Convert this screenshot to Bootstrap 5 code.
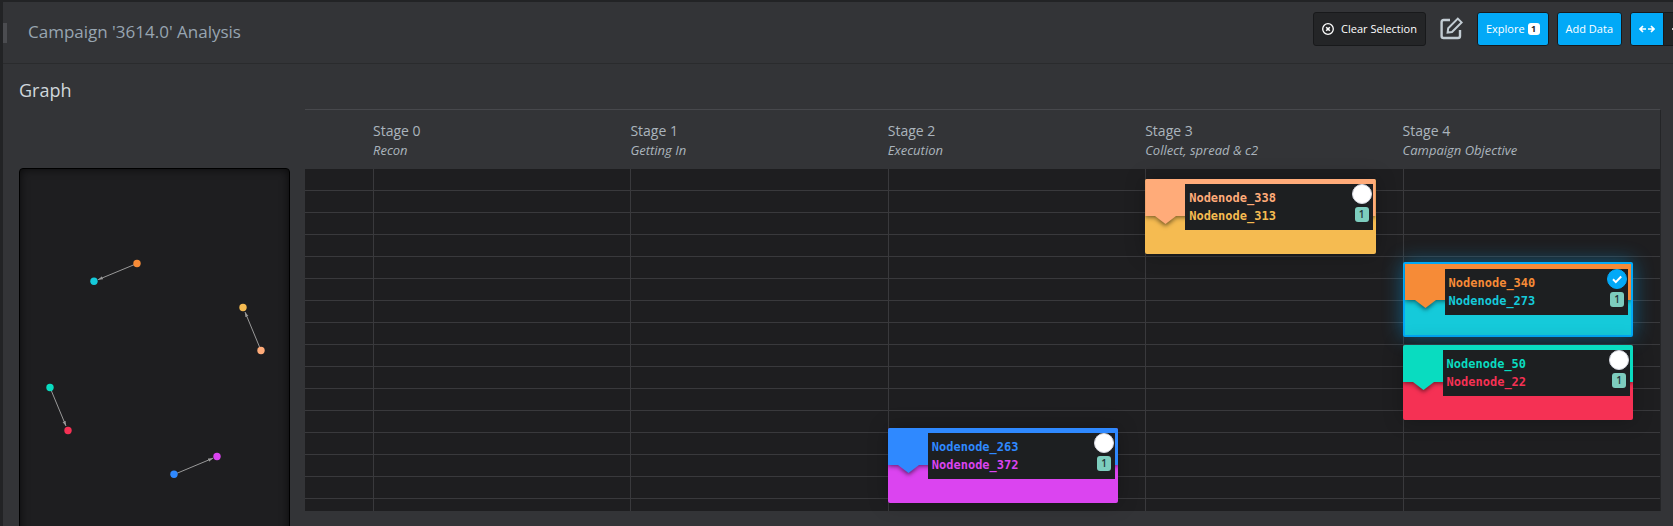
<!DOCTYPE html>
<html lang="en">
<head>
<meta charset="utf-8">
<meta name="viewport" content="width=device-width, initial-scale=1">
<title>Campaign '3614.0' Analysis</title>
<link href="https://cdn.jsdelivr.net/npm/bootstrap@5.3.0/dist/css/bootstrap.min.css" rel="stylesheet">
<style>
  html, body { height: 100%; }
  body { background: #222325; color: #abb4bd; font-family: "Open Sans", "Noto Sans", sans-serif; font-size: 14px; overflow: hidden; padding: 2px 0 0 3px; }
  .shell { background: #333437; height: 100%; overflow: hidden; }
  .topbar { height: 62px; border-bottom: 1px solid #2a2b2d; padding-bottom: 8px; }
  .handle { width: 4px; height: 20px; background: #4b4c50; margin-top: 8px; }
  .title { font-size: 17px; line-height: 24px; color: #98a5b1; margin: 7px 0 0 21px; }
  .tools { gap: 8px; margin-right: -24px; }
  .tool { --bs-btn-font-size: 11px; --bs-btn-line-height: 18px; --bs-btn-padding-x: 8px; --bs-btn-padding-y: 7px;
    --bs-btn-color: #fff; --bs-btn-bg: #242527; --bs-btn-border-color: #18191b; --bs-btn-border-radius: 3px; white-space: nowrap; height: 34px; }
  .tool-clear { gap: 7px; }
  .tool-blue { --bs-btn-bg: #02a9f7; }
  .edit { margin: 0 6px; }
  .count { background: #fff; color: #242527; font-size: 9px; line-height: 12px; font-weight: 700; border-radius: 3px; width: 12px; margin-left: 3px; }
  .section-title { font-size: 18px; line-height: 24px; color: #d0d7dc; margin: 14px 0 66px; }
  .side { width: 271px; }
  .minimap { height: 420px; background: #1e1e20; border: 1px solid #000; border-radius: 4px; box-shadow: inset 0 0 10px #000a; }
  .timeline { border-top: 1px solid #47484c; border-right: 1px solid #242527; margin: 45px 12px 0 15px; }
  .stages { display: grid; grid-template-columns: 68px repeat(5, 1fr); }
  .stage-heads { height: 59px; padding-top: 11px; }
  .stage-name { font-size: 14px; line-height: 20px; }
  .stage-sub { font-size: 13px; line-height: 18px; font-style: italic; }
  .lanes { grid-template-rows: repeat(4, 75px); row-gap: 8px; padding: 10px 0 8px;
    background: repeating-linear-gradient(#1e1e20 0 21px, #39393c 21px 22px); }
  .rule { grid-row: 1 / 5; border-left: 1px solid #39393c; margin: -10px 0 -8px; }
  .event { --line: 0px; background: var(--to); margin-right: 27px; border-radius: 2px; box-shadow: 0 0 20px #0004; position: relative; }
  .event::before { content: ""; display: block; height: calc(37px - var(--line)); background: var(--from); box-shadow: 0 1px 5px #0009; border-radius: 2px 2px 0 0; clip-path: inset(0 0 -8px 0); }
  .event.selected { --line: 1px; border: 2px solid #02a9f7; box-shadow: 0 0 20px #02a9f777; }
  .event.selected::before { border-radius: 0; }
  .arrow { position: absolute; left: 10px; top: calc(37px - var(--line)); width: 21px; height: 8px; overflow: visible; filter: drop-shadow(0 2px 2px #0008); fill: var(--from); clip-path: inset(0 -6px -8px -6px); }
  .info { position: absolute; left: 40px; right: 3px; top: 5px; height: 46px; background: #1d1f21; padding: 5px 4px;
    font: 700 12px/18px "DejaVu Sans Mono", monospace; }
  .from { color: var(--from); } .to { color: var(--to); }
  .marks { position: absolute; right: 1px; top: 0; width: 20px; gap: 3px; }
  .pick { appearance: none; width: 20px; height: 20px; border-radius: 50%; background: #fff; border: 1px solid #d5d7e0; margin: 0; }
  .pick:checked { border-color: #02a9f7; background: #02a9f7 url("data:image/svg+xml,%3Csvg xmlns='http://www.w3.org/2000/svg' viewBox='0 0 18 18'%3E%3Cpath d='M5 9.3l2.8 2.8 5.4-5.6' fill='none' stroke='white' stroke-width='2'/%3E%3C/svg%3E"); }
  .total { background: #7dcdbe; color: #24363a; border-radius: 3px; width: 14px; text-align: center; font: 600 10px/15px "Open Sans", sans-serif; }
  .s2 { grid-column: 4; } .s3 { grid-column: 5; } .s4 { grid-column: 6; }
  .r1 { grid-row: 1; } .r2 { grid-row: 2; } .r3 { grid-row: 3; } .r4 { grid-row: 4; }
  .peach { --from: #ffab79; --to: #f5bb51; }
  .orange { --from: #f68b37; --to: #15cada; }
  .teal { --from: #09dcc0; --to: #f53154; }
  .blue { --from: #2f89ff; --to: #db44f0; }
</style>
</head>
<body>
<div class="shell">
  <header class="topbar d-flex align-items-center">
    <div class="handle"></div>
    <h1 class="title">Campaign '3614.0' Analysis</h1>
    <div class="tools d-flex align-items-center ms-auto">
      <button class="btn tool tool-clear d-flex align-items-center" type="button">
        <svg width="12" height="12" viewBox="0 0 12 12" fill="none" stroke="#fff" stroke-width="1.3"><circle cx="6" cy="6" r="5.3"/><path d="M4.2 4.2l3.6 3.6M7.8 4.2l-3.6 3.6" stroke-width="1.6"/></svg>
        Clear Selection</button>
      <a href="#" class="edit d-flex" aria-label="Edit"><svg width="23" height="23" viewBox="0 0 23 23" fill="none" stroke="#c3ccd3" stroke-width="2.4"><path d="M10 3H3.6Q1.6 3 1.6 5v14q0 2 2 2H18q2 0 2-2v-6"/><path d="M7.6 15.6l.6-4.4 9.6-9.6 3.8 3.8-9.6 9.6z" stroke-width="2"/></svg></a>
      <button class="btn tool tool-blue d-flex align-items-center" type="button">Explore <span class="count">1</span></button>
      <button class="btn tool tool-blue" type="button">Add Data</button>
      <div class="btn-group">
        <button class="btn tool tool-blue" type="button" aria-label="Fit width"><svg class="d-block" width="16" height="8" viewBox="0 0 16 8" fill="none" stroke="#fff" stroke-width="1.7"><path d="M1 4h6M9 4h6M4 1L1 4l3 3M12 1l3 3-3 3"/></svg></button>
        <button class="btn tool" type="button" aria-label="Collapse"><svg class="d-block" width="16" height="8" viewBox="0 0 16 8" fill="none" stroke="#fff" stroke-width="1.7"><path d="M0 4h6M10 4h6M3 1l3 3-3 3M13 1l-3 3 3 3"/></svg></button>
      </div>
    </div>
  </header>
  <main class="d-flex">
    <section class="side flex-shrink-0 ms-3">
      <h2 class="section-title">Graph</h2>
      <div class="minimap">
        <svg width="269" height="418" viewBox="20 169 269 418">
          <defs><marker id="tip" viewBox="0 0 6 4" refX="6" refY="2" markerWidth="5" markerHeight="4" orient="auto"><path d="M0 0l6 2-6 2z" fill="#999"/></marker></defs>
          <g stroke="#999">
            <path d="M137 263.5L98 279.7" marker-end="url(#tip)"/><path d="M261 350.5L245 312" marker-end="url(#tip)"/><path d="M50 387.5L66 426" marker-end="url(#tip)"/><path d="M174 474.5L213 458.2" marker-end="url(#tip)"/>
          </g>
          <circle cx="137" cy="263.5" r="3.7" fill="#f68b37"/><circle cx="94" cy="281.3" r="3.7" fill="#15cada"/>
          <circle cx="243" cy="307.5" r="3.7" fill="#f5bb51"/><circle cx="261" cy="350.5" r="3.7" fill="#ffab79"/>
          <circle cx="50" cy="387.5" r="3.7" fill="#09dcc0"/><circle cx="68" cy="430.5" r="3.7" fill="#f53154"/>
          <circle cx="174" cy="474.3" r="3.7" fill="#2f89ff"/><circle cx="217" cy="456.5" r="3.7" fill="#db44f0"/>
        </svg>
      </div>
    </section>
    <section class="timeline flex-grow-1 align-self-start">
      <div class="stages stage-heads">
        <span></span>
        <div><div class="stage-name">Stage 0</div><div class="stage-sub">Recon</div></div>
        <div><div class="stage-name">Stage 1</div><div class="stage-sub">Getting In</div></div>
        <div><div class="stage-name">Stage 2</div><div class="stage-sub">Execution</div></div>
        <div><div class="stage-name">Stage 3</div><div class="stage-sub">Collect, spread &amp; c2</div></div>
        <div><div class="stage-name">Stage 4</div><div class="stage-sub">Campaign Objective</div></div>
      </div>
      <div class="stages lanes">
        <div class="rule" style="grid-column:2"></div>
        <div class="rule" style="grid-column:3"></div>
        <div class="rule" style="grid-column:4"></div>
        <div class="rule" style="grid-column:5"></div>
        <div class="rule" style="grid-column:6"></div>
        <article class="event peach s3 r1">
          <svg class="arrow" viewBox="0 0 21 8"><path d="M0 0h21l-10.5 8z"/></svg>
          <div class="info"><div class="from">Nodenode_338</div><div class="to">Nodenode_313</div>
            <div class="marks d-flex flex-column align-items-center"><input class="pick" type="checkbox" aria-label="Select Nodenode_338"><span class="total">1</span></div></div>
        </article>
        <article class="event orange selected s4 r2">
          <svg class="arrow" viewBox="0 0 21 8"><path d="M0 0h21l-10.5 8z"/></svg>
          <div class="info"><div class="from">Nodenode_340</div><div class="to">Nodenode_273</div>
            <div class="marks d-flex flex-column align-items-center"><input class="pick" type="checkbox" checked aria-label="Select Nodenode_340"><span class="total">1</span></div></div>
        </article>
        <article class="event teal s4 r3">
          <svg class="arrow" viewBox="0 0 21 8"><path d="M0 0h21l-10.5 8z"/></svg>
          <div class="info"><div class="from">Nodenode_50</div><div class="to">Nodenode_22</div>
            <div class="marks d-flex flex-column align-items-center"><input class="pick" type="checkbox" aria-label="Select Nodenode_50"><span class="total">1</span></div></div>
        </article>
        <article class="event blue s2 r4">
          <svg class="arrow" viewBox="0 0 21 8"><path d="M0 0h21l-10.5 8z"/></svg>
          <div class="info"><div class="from">Nodenode_263</div><div class="to">Nodenode_372</div>
            <div class="marks d-flex flex-column align-items-center"><input class="pick" type="checkbox" aria-label="Select Nodenode_263"><span class="total">1</span></div></div>
        </article>
      </div>
    </section>
  </main>
</div>
<script src="https://cdn.jsdelivr.net/npm/bootstrap@5.3.0/dist/js/bootstrap.bundle.min.js"></script>
</body>
</html>
